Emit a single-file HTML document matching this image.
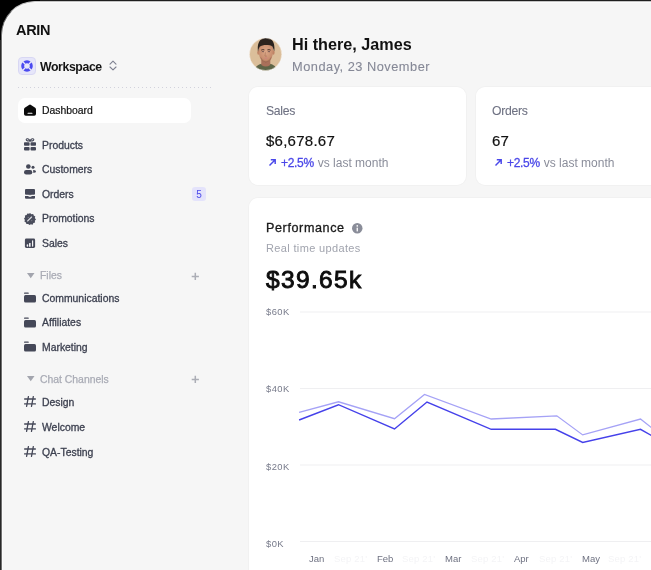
<!DOCTYPE html>
<html><head><meta charset="utf-8">
<style>
*{margin:0;padding:0;box-sizing:border-box}
html,body{width:651px;height:570px;overflow:hidden;background:#000}
body{font-family:"Liberation Sans",sans-serif;position:relative}
#frame{position:absolute;left:1px;top:1px;width:700px;height:620px;border-top-left-radius:34px;border-top:1px solid #c4c4c4;border-left:1px solid #707070;background:#fbfbfb}
#topline{position:absolute;left:40px;top:0;width:611px;height:1px;background:#1e1e1e}#leftline{position:absolute;left:0;top:40px;width:1px;height:530px;background:#282828}
#app{position:absolute;left:3px;top:3px;width:700px;height:620px;border-top-left-radius:32.5px;background:#f6f6f6}
.abs{position:absolute;white-space:nowrap;will-change:transform}
.logo{left:16px;top:21.5px;font-size:14.5px;letter-spacing:-0.3px;font-weight:bold;color:#111}
.ws-ic{left:18px;top:57px;width:18px;height:18px;border-radius:4px;background:#e6e6fa;border:1px solid #d8d7f3}
.ws{left:40px;top:59.8px;font-size:12.3px;letter-spacing:-0.4px;font-weight:bold;color:#151515}
.dots{left:18px;top:87px;width:194px;height:1px;background-image:linear-gradient(to right,#d2d2dc 30%,transparent 30%);background-size:4px 1px}
.dash-box{left:18px;top:98px;width:173px;height:25px;border-radius:7px;background:#fff}
.nav{font-size:10.4px;color:#3d4150;left:42px;-webkit-text-stroke:0.3px #3d4150}
.nav.active{color:#111;-webkit-text-stroke:0.2px #111}
.ic{position:absolute;left:24px}
.sec{font-size:10.4px;color:#a9abb5;left:41px;-webkit-text-stroke:0.25px #a9abb5}
.badge{left:192px;top:187px;width:14px;height:14px;border-radius:3px;background:#e4e3fb;color:#4a48ea;font-size:10px;text-align:center;line-height:16px}
.card{position:absolute;background:#fff;border-radius:9px;box-shadow:0 0 0 1px rgba(0,0,0,0.02)}
.hi{left:292px;top:35px;font-size:16.2px;font-weight:bold;color:#111}
.date{left:292px;top:59px;font-size:12.8px;letter-spacing:0.5px;color:#858896;-webkit-text-stroke:0.1px #858896}
.lbl{font-size:12.2px;letter-spacing:-0.3px;color:#6f7283;-webkit-text-stroke:0.1px #6f7283}
.val{font-size:15px;letter-spacing:0.25px;color:#111;-webkit-text-stroke:0.2px #111}
.chg{font-size:12px;color:#8a8d9a}
.chg b{font-weight:normal;letter-spacing:-0.3px;margin-right:0.5px;color:#4a47e8;-webkit-text-stroke:0.3px #4a47e8}
.perf{left:266px;top:221px;font-size:12.6px;letter-spacing:0.6px;color:#1a1a1a;-webkit-text-stroke:0.3px #1a1a1a}
.rt{left:266px;top:241.8px;font-size:11px;letter-spacing:0.35px;color:#a1a4ae}
.big{left:266.3px;top:265.5px;font-size:24.5px;letter-spacing:1.35px;font-weight:normal;-webkit-text-stroke:0.9px #0d0d0d;color:#0d0d0d}
.yl{font-size:9.4px;letter-spacing:0.45px;color:#777a8a;left:266px}
.xl{font-size:9.5px;color:#6f7282}
.xf{font-size:9.5px;letter-spacing:0.2px;color:#f4f4f6}
</style></head><body>
<div id="frame"></div><div id="topline"></div><div id="leftline"></div>
<div id="app"></div>

<div class="abs logo">ARIN</div>
<div class="abs ws-ic"><svg width="16" height="16" viewBox="0 0 16 16" style="position:absolute;left:0;top:0"><circle cx="8" cy="8" r="4.3" fill="none" stroke="#4b4af0" stroke-width="3"/><g stroke="#e6e6fa" stroke-width="1.3"><line x1="2" y1="2" x2="6" y2="6"/><line x1="14" y1="2" x2="10" y2="6"/><line x1="2" y1="14" x2="6" y2="10"/><line x1="14" y1="14" x2="10" y2="10"/></g></svg></div>
<div class="abs ws">Workspace</div>
<svg class="abs" style="left:108px;top:59px" width="10" height="14" viewBox="0 0 10 14"><path d="M2 5.2 L5 2.2 L8 5.2 M2 8 L5 10.8 L8 8" fill="none" stroke="#7e8190" stroke-width="1.1" stroke-linecap="round" stroke-linejoin="round"/></svg>
<div class="abs dots"></div>
<div class="abs dash-box"></div>

<!-- nav -->
<svg class="ic abs" style="top:104.2px" width="12" height="12" viewBox="0 0 12 12"><path d="M5 0.9 Q6 0.2 7 0.9 L11.2 3.8 Q12 4.4 12 5.4 V10 Q12 11.8 10.2 11.8 H1.8 Q0 11.8 0 10 V5.4 Q0 4.4 0.8 3.8 Z" fill="#0b0b0b"/><rect x="3.5" y="8.7" width="5" height="1.1" rx="0.55" fill="#fff"/></svg>
<div class="abs nav active" style="top:105.3px">Dashboard</div>

<svg class="ic abs" style="top:138px" width="12" height="13" viewBox="0 0 12 13"><g fill="#454858"><rect x="0" y="4.2" width="5.6" height="3.5" rx="0.8"/><rect x="6.5" y="4.2" width="5.5" height="3.5" rx="0.8"/><rect x="0" y="8.9" width="5.6" height="3.7" rx="1"/><rect x="6.5" y="8.9" width="5.5" height="3.7" rx="1"/></g><g fill="none" stroke="#454858" stroke-width="1.1"><path d="M6 3 C5 0.6 2.2 0 2.2 1.8 C2.2 3 4.5 3 6 3 Z"/><path d="M6 3 C7 0.6 9.8 0 9.8 1.8 C9.8 3 7.5 3 6 3 Z"/></g></svg>
<div class="abs nav" style="top:139.8px">Products</div>

<svg class="ic abs" style="top:163px" width="12" height="12" viewBox="0 0 12 12"><g fill="#454858"><circle cx="4.35" cy="3.5" r="2.3"/><rect x="0" y="7" width="8.3" height="4.4" rx="2.2"/><circle cx="9" cy="4.3" r="1.5"/><path d="M9.2 7 H9.8 Q12 7.2 12 8.4 Q12 9.6 9.8 9.7 H9.2 Z"/></g></svg>
<div class="abs nav" style="top:164.3px">Customers</div>

<svg class="ic abs" style="top:188px" width="12" height="12" viewBox="0 0 12 12"><g fill="#454858"><rect x="1" y="1.1" width="10" height="5.6" rx="1"/><path d="M4 6.5 Q6 8 8 6.5 Z"/><path d="M1 8.1 H3.8 Q6 9.7 8.2 8.1 H11 V9.8 Q11 10.7 10 10.7 H2 Q1 10.7 1 9.8 Z"/></g></svg>
<div class="abs nav" style="top:188.8px">Orders</div>
<div class="abs badge">5</div>

<svg class="ic abs" style="top:212.8px" width="12" height="12" viewBox="0 0 12 12"><path d="M6 0 L7.4 1.2 L9.2 0.9 L9.7 2.6 L11.3 3.4 L10.8 5.1 L12 6.5 L10.8 7.8 L11.1 9.6 L9.4 10.1 L8.6 11.7 L6.9 11.2 L5.5 12 L4.2 10.9 L2.4 11.1 L1.9 9.4 L0.4 8.6 L0.9 6.9 L0 5.5 L1.1 4.2 L0.9 2.4 L2.6 1.9 L3.4 0.4 L5.1 0.8 Z" fill="#4a4d5c"/><path d="M3.6 8 L7.6 4" stroke="#dcdde2" stroke-width="1.1" stroke-linecap="round"/><circle cx="4.3" cy="4.4" r="0.7" fill="#7a7c88"/><circle cx="7.7" cy="7.6" r="0.7" fill="#7a7c88"/></svg>
<div class="abs nav" style="top:213.3px">Promotions</div>

<svg class="ic abs" style="top:237px" width="12" height="12" viewBox="0 0 12 12"><rect x="0.9" y="1.6" width="10.2" height="9.4" rx="1.4" fill="#454858"/><g fill="#f4f4f6"><rect x="2.7" y="7.3" width="1.5" height="2.4" rx="0.7"/><rect x="5" y="6" width="1.6" height="3.7" rx="0.5"/><rect x="8" y="3.2" width="1.2" height="6.5" rx="0.6"/></g></svg>
<div class="abs nav" style="top:238.3px">Sales</div>

<!-- Files -->
<svg class="abs" style="left:27px;top:272.5px" width="8" height="6" viewBox="0 0 8 6"><path d="M0 0 H7.5 L3.75 5.2 Z" fill="#a3a5ae"/></svg>
<div class="abs sec" style="top:270px;left:40px">Files</div>
<svg class="abs" style="left:190.5px;top:271.5px" width="9" height="9" viewBox="0 0 9 9"><path d="M4.3 0.8 V8 M0.7 4.4 H7.9" stroke="#acaeb6" stroke-width="1.5"/></svg>

<svg class="ic abs" style="top:292px" width="12" height="11" viewBox="0 0 12 11"><rect x="0" y="0.6" width="4.8" height="1.2" rx="0.6" fill="#454858"/><rect x="0" y="3" width="12" height="7.6" rx="1.5" fill="#454858"/></svg>
<div class="abs nav" style="top:292.8px">Communications</div>
<svg class="ic abs" style="top:316.5px" width="12" height="11" viewBox="0 0 12 11"><rect x="0" y="0.6" width="4.8" height="1.2" rx="0.6" fill="#454858"/><rect x="0" y="3" width="12" height="7.6" rx="1.5" fill="#454858"/></svg>
<div class="abs nav" style="top:317.3px">Affiliates</div>
<svg class="ic abs" style="top:341px" width="12" height="11" viewBox="0 0 12 11"><rect x="0" y="0.6" width="4.8" height="1.2" rx="0.6" fill="#454858"/><rect x="0" y="3" width="12" height="7.6" rx="1.5" fill="#454858"/></svg>
<div class="abs nav" style="top:341.8px">Marketing</div>

<!-- Chat -->
<svg class="abs" style="left:27px;top:376px" width="8" height="6" viewBox="0 0 8 6"><path d="M0 0 H7.5 L3.75 5.2 Z" fill="#a3a5ae"/></svg>
<div class="abs sec" style="top:373.5px;left:40px">Chat Channels</div>
<svg class="abs" style="left:190.5px;top:374.5px" width="9" height="9" viewBox="0 0 9 9"><path d="M4.3 0.8 V8 M0.7 4.4 H7.9" stroke="#acaeb6" stroke-width="1.5"/></svg>

<svg class="ic abs" style="top:396px" width="12" height="11" viewBox="0 0 12 11"><path d="M4.4 0.6 L2.6 10.4 M9.3 0.6 L7.5 10.4 M0.6 3 H11.4 M0.6 7.9 H11.4" stroke="#454858" stroke-width="1.3" stroke-linecap="round" fill="none"/></svg>
<div class="abs nav" style="top:396.8px">Design</div>
<svg class="ic abs" style="top:421px" width="12" height="11" viewBox="0 0 12 11"><path d="M4.4 0.6 L2.6 10.4 M9.3 0.6 L7.5 10.4 M0.6 3 H11.4 M0.6 7.9 H11.4" stroke="#454858" stroke-width="1.3" stroke-linecap="round" fill="none"/></svg>
<div class="abs nav" style="top:421.8px">Welcome</div>
<svg class="ic abs" style="top:446px" width="12" height="11" viewBox="0 0 12 11"><path d="M4.4 0.6 L2.6 10.4 M9.3 0.6 L7.5 10.4 M0.6 3 H11.4 M0.6 7.9 H11.4" stroke="#454858" stroke-width="1.3" stroke-linecap="round" fill="none"/></svg>
<div class="abs nav" style="top:446.8px">QA-Testing</div>

<!-- main header -->
<svg class="abs" style="left:249px;top:38px" width="33" height="33" viewBox="0 0 33 33">
<defs><clipPath id="cc"><circle cx="16.6" cy="16.3" r="16.2"/></clipPath>
<radialGradient id="fg" cx="0.5" cy="0.4" r="0.65"><stop offset="0" stop-color="#dba888"/><stop offset="0.7" stop-color="#c98f70"/><stop offset="1" stop-color="#a87258"/></radialGradient></defs>
<g clip-path="url(#cc)">
<rect width="33" height="33" fill="#dbbe9a"/>
<path d="M5 33 C6 28.5 9 26.5 13 25.8 L20.5 25.8 C24.5 26.5 27.5 28.5 28.5 33 Z" fill="#5e6547"/>
<path d="M12.3 19 H21.3 V27 Q16.8 30 12.3 27 Z" fill="#a9705a"/>
<ellipse cx="9.5" cy="14.5" rx="1.3" ry="2.3" fill="#bf8466"/>
<ellipse cx="24.3" cy="14.5" rx="1.3" ry="2.3" fill="#bf8466"/>
<path d="M9.8 11 C9.8 20.5 12.3 24 16.9 24 C21.5 24 24 20.5 24 11 C24 7.5 20.5 6.5 16.9 6.5 C13.3 6.5 9.8 7.5 9.8 11 Z" fill="url(#fg)"/>
<path d="M9 13.8 C7.8 5 11 0 17 -0.2 C23.2 0 26.4 4.5 25.2 13.5 C24.5 11 24 9.8 23.4 8.6 C20.5 6.6 13.5 6.6 10.7 8.8 C10 10 9.5 11.5 9 13.8 Z" fill="#2b231e"/>
<path d="M12.2 12.1 Q13.7 11.2 15.4 11.9 M18.4 11.9 Q20.1 11.2 21.6 12.1" stroke="#3a2a22" stroke-width="0.9" fill="none"/>
<path d="M12.8 13.8 Q13.9 13.2 15 13.8 M18.8 13.8 Q19.9 13.2 21 13.8" stroke="#4a3a40" stroke-width="0.7" fill="none"/>
<path d="M16.5 14.3 L15.9 18 Q16.9 18.6 17.9 18" stroke="#a06c54" stroke-width="0.5" fill="none"/>
<path d="M15 19.9 Q16.9 19.2 18.8 19.9 Q16.9 21.1 15 19.9 Z" fill="#cc7e7c"/>
<path d="M11.8 19.5 Q12.8 23.6 16.9 24 Q21 23.6 22 19.5" stroke="#6e4a3a" stroke-width="0.6" fill="none" opacity="0.5"/>
</g>
<circle cx="16.6" cy="16.3" r="16.2" fill="none" stroke="#fff" stroke-width="0.6" opacity="0.7"/>
</svg>
<div class="abs hi">Hi there, James</div>
<div class="abs date">Monday, 23 November</div>

<div class="card" style="left:249.4px;top:86.7px;width:216.4px;height:98.4px"></div>
<div class="abs lbl" style="left:266px;top:104.1px">Sales</div>
<div class="abs val" style="left:266px;top:132px">$6,678.67</div>
<svg class="abs" style="left:268px;top:158px" width="9" height="9" viewBox="0 0 9 9"><path d="M1.5 7.4 L7.2 1.7 M2.8 1.7 H7.2 V6.1" stroke="#4a48ea" stroke-width="1.45" fill="none"/></svg>
<div class="abs chg" style="left:281px;top:155.5px"><b>+2.5%</b> vs last month</div>

<div class="card" style="left:475.8px;top:86.7px;width:216.4px;height:98.4px"></div>
<div class="abs lbl" style="left:492px;top:104.1px">Orders</div>
<div class="abs val" style="left:492px;top:132px">67</div>
<svg class="abs" style="left:494px;top:158px" width="9" height="9" viewBox="0 0 9 9"><path d="M1.5 7.4 L7.2 1.7 M2.8 1.7 H7.2 V6.1" stroke="#4a48ea" stroke-width="1.45" fill="none"/></svg>
<div class="abs chg" style="left:507px;top:155.5px"><b>+2.5%</b> vs last month</div>

<div class="card" style="left:249.4px;top:198px;width:460px;height:420px"></div>
<div class="abs perf">Performance</div>
<svg class="abs" style="left:351.5px;top:222.5px" width="11" height="11" viewBox="0 0 11 11"><circle cx="5.25" cy="5.25" r="5.25" fill="#8a8d99"/><rect x="4.6" y="4.7" width="1.3" height="3.7" fill="#fff"/><circle cx="5.25" cy="2.9" r="0.8" fill="#fff"/></svg>
<div class="abs rt">Real time updates</div>
<div class="abs big">$39.65k</div>

<div class="abs yl" style="top:306.3px">$60K</div>
<div class="abs yl" style="top:383.4px">$40K</div>
<div class="abs yl" style="top:460.6px">$20K</div>
<div class="abs yl" style="top:537.6px">$0K</div>
<svg class="abs" style="left:0;top:0" width="651" height="570">
<g stroke="#efeff1" stroke-width="1">
<line x1="300" y1="312" x2="651" y2="312"/>
<line x1="300" y1="388.5" x2="651" y2="388.5"/>
<line x1="300" y1="465" x2="651" y2="465"/>
<line x1="300" y1="541.5" x2="651" y2="541.5"/>
</g>
<polyline points="299.1,412.4 338.5,401.8 394.5,418.7 424.5,394.5 491.2,419 556.8,415.8 582.7,434.9 640.5,419 660,434.4" fill="none" stroke="#a5a2f6" stroke-width="1.3"/>
<polyline points="299.1,420 338.5,404.7 394.5,429 427,402 491.2,429.3 555.4,429.3 582.7,442.5 640.5,429.3 660,440.4" fill="none" stroke="#4541ea" stroke-width="1.45"/>
</svg>
<div class="abs xl" style="left:309px;top:553px">Jan</div>
<div class="abs xf" style="left:334px;top:553px">Sep 21'</div>
<div class="abs xl" style="left:377px;top:553px">Feb</div>
<div class="abs xf" style="left:402px;top:553px">Sep 21'</div>
<div class="abs xl" style="left:445px;top:553px">Mar</div>
<div class="abs xf" style="left:471px;top:553px">Sep 21'</div>
<div class="abs xl" style="left:514px;top:553px">Apr</div>
<div class="abs xf" style="left:539px;top:553px">Sep 21'</div>
<div class="abs xl" style="left:582px;top:553px">May</div>
<div class="abs xf" style="left:608px;top:553px">Sep 21'</div>
</body></html>
